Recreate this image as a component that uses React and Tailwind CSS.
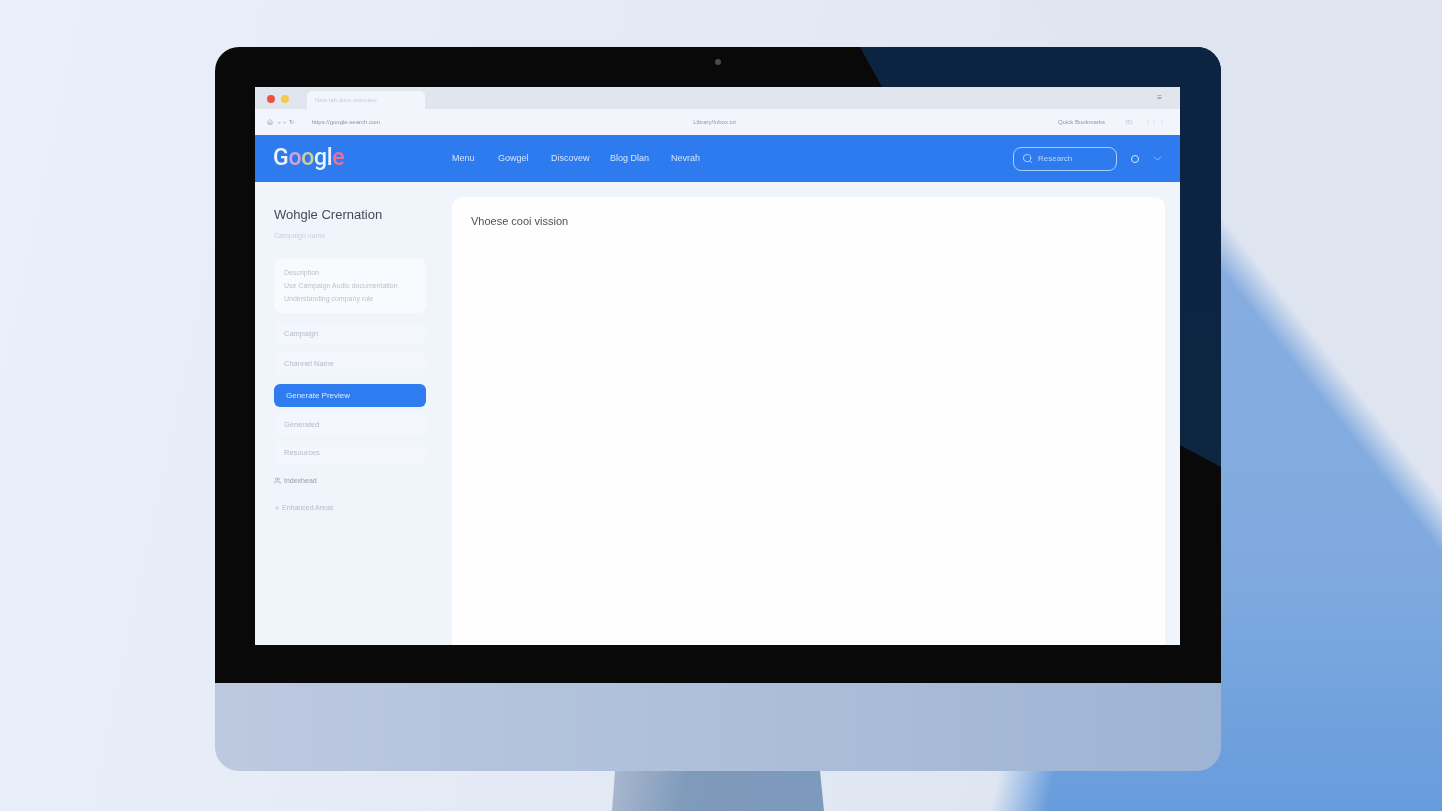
import { Search, ChevronDown, Plus, Home, Users } from 'lucide-react';

const navItems = [
  { label: 'Menu', width: 'w-[46px]' },
  { label: 'Gowgel', width: 'w-[53px]' },
  { label: 'Discovew', width: 'w-[59px]' },
  { label: 'Blog Dlan', width: 'w-[61px]' },
  { label: 'Nevrah', width: 'w-[40px]' },
];

function SideRow({ label, active }) {
  if (active) {
    return (
      <div className="flex h-[23px] items-center rounded-[6px] bg-[#2e7cf0] pl-[12px] text-[8px] text-[#dcebff] [filter:blur(0.35px)]">
        {label}
      </div>
    );
  }
  return (
    <div className="flex h-[23px] items-center rounded-[6px] bg-[#f3f6fc] pl-[10px] text-[7.5px] text-[#b4bbc8] [filter:blur(0.35px)]">
      {label}
    </div>
  );
}

function Browser() {
  return (
    <div className="relative flex h-[558px] w-[925px] flex-col overflow-hidden bg-[#f0f4fb]">
      {/* tab strip */}
      <div className="flex h-[22px] items-end bg-[#e1e5ed]">
        <div className="flex h-full items-center gap-[6px] pl-[12px] pt-[2px]">
          <span className="h-[8px] w-[8px] rounded-full bg-[#e8543f]" />
          <span className="h-[8px] w-[8px] rounded-full bg-[#f2c94c]" />
        </div>
        <div className="ml-[18px] flex h-[18px] w-[118px] items-center rounded-t-[5px] bg-[#f2f5fb] pl-[8px] text-[6px] text-[#c6ccd8] [filter:blur(0.3px)]">
          New tab docs overview
        </div>
        <div className="flex h-full flex-1 items-center justify-end pr-[18px] text-[8px] text-[#7d8490]">
          ≡
        </div>
      </div>

      {/* address row */}
      <div className="flex h-[26px] items-center bg-[#f2f5fb] pl-[12px] pr-[15px] text-[6px] text-[#8f96a3] [filter:blur(0.3px)]">
        <Home size={6} className="text-[#8f96a3]" />
        <span className="ml-[5px] w-[34px]">‹· ›· ↻·</span>
        <span className="w-[385px]">https://google.search.com</span>
        <span className="w-[368px]">Library/Inbox.txt</span>
        <span className="w-[68px]">Quick Bookmarks</span>
        <span className="w-[20px] text-[#b9bfca]">(5)</span>
        <span className="w-[14px] text-[#c6ccd6]">⋮⋮</span>
        <span className="text-[#c6ccd6]">⋮</span>
      </div>

      {/* blue header */}
      <div className="flex h-[47px] items-center bg-[#2d7bef] pl-[18px]">
        <div className="mb-[3px] flex w-[179px] font-['Roboto',sans-serif] text-[23px] font-medium leading-none tracking-[-0.3px] [filter:blur(0.4px)]">
          <span className="text-[#eaf5ff]">G</span>
          <span className="text-[#d7a3d3]">o</span>
          <span className="text-[#cfcf98]">o</span>
          <span className="text-[#e6f6ff]">g</span>
          <span className="text-[#e6f2ff]">l</span>
          <span className="text-[#ef6f9c]">e</span>
        </div>
        <div className="flex text-[9px] text-[#d4e6ff] [filter:blur(0.3px)]">
          {navItems.map((n) => (
            <span key={n.label} className={n.width}>{n.label}</span>
          ))}
        </div>
        <div className="ml-[302px] flex h-[24px] w-[104px] items-center rounded-[8px] border border-[#a9d0fb] pl-[8px]">
          <Search size={11} strokeWidth={1.6} className="text-[#d8eaff]" />
          <span className="ml-[5px] text-[8px] text-[#b9d7fd] [filter:blur(0.3px)]">Research</span>
        </div>
        <span className="ml-[14px] h-[8px] w-[8px] rounded-full border-[1.5px] border-[#d8eaff]" />
        <ChevronDown size={13} strokeWidth={1.3} className="ml-[12px] text-[#b9d7fd]" />
      </div>

      {/* body */}
      <div className="flex flex-1">
        <aside className="w-[197px] pl-[19px] pr-[26px] pt-[25px]">
          <h1 className="text-[13px] leading-[16px] text-[#454b55] [filter:blur(0.25px)]">Wohgle Crernation</h1>
          <p className="mt-[8px] text-[7px] leading-[9px] text-[#cbd2de] [filter:blur(0.3px)]">Campaign name</p>

          <div className="mt-[18px] flex h-[55px] flex-col justify-center gap-[4px] rounded-[8px] bg-[#f8fafd] pl-[10px] text-[7px] leading-[9px] text-[#bcc3cf] [filter:blur(0.3px)]">
            <span>Description</span>
            <span>Use Campaign Audio documentation</span>
            <span>Understanding company rule</span>
          </div>

          <div className="mt-[9px] flex flex-col gap-[7px]">
            <SideRow label="Campaign" />
            <SideRow label="Channel Name" />
          </div>
          <div className="mt-[9px]">
            <SideRow label="Generate Preview" active />
          </div>
          <div className="mt-[6px] flex flex-col gap-[5px]">
            <SideRow label="Generated" />
            <SideRow label="Resources" />
          </div>

          <div className="mt-[12px] flex items-center gap-[3px] text-[7px] leading-[9px] text-[#949cab] [filter:blur(0.3px)]">
            <Users size={7} />
            <span>Indexhead</span>
          </div>
          <div className="mt-[18px] flex items-center gap-[2px] text-[7px] leading-[9px] text-[#b4bbc8] [filter:blur(0.3px)]">
            <Plus size={6} />
            <span>Enhanced Areas</span>
          </div>
        </aside>

        <main className="mr-[15px] mt-[15px] flex-1 rounded-t-[10px] bg-[#fefefe] pl-[19px] pt-[17px]">
          <p className="text-[11px] leading-[14px] text-[#4d525b] [filter:blur(0.25px)]">Vhoese cooi vission</p>
        </main>
      </div>
    </div>
  );
}

export default function App() {
  return (
    <div className="h-[811px] w-full overflow-hidden bg-[linear-gradient(232deg,#dee4f0_18.8%,rgba(222,228,240,0)_20.8%),linear-gradient(102deg,#eaf0f9_0%,#e4eaf5_45%,#dfe6f2_72%,rgba(223,230,242,0)_75.5%),linear-gradient(180deg,#86ade0_30%,#80aadf_70%,#679cdc_100%)] pl-[215px] pt-[47px] font-['Liberation_Sans',sans-serif]">
      <div className="flex w-[1006px] flex-col">
        <div className="relative overflow-hidden rounded-t-[24px] bg-[#090909] px-[40px] pb-[38px] pt-[40px]">
          {/* navy reflection on the bezel */}
          <div className="absolute inset-0 bg-[linear-gradient(180deg,#0c2341,#0d2742)] [clip-path:polygon(645px_0,667px_40px,965px_398px,1006px_420px,1006px_0)]" />
          {/* camera */}
          <span className="absolute left-[500px] top-[12px] h-[6px] w-[6px] rounded-full bg-[#4a4a4a]" />
          <div className="relative">
            <Browser />
          </div>
        </div>
        <div className="h-[88px] rounded-b-[24px] bg-[linear-gradient(90deg,#bdc9df_0%,#b0c1db_40%,#9eb4d4_100%)]" />
        <div className="ml-[397px] h-[40px] w-[212px] bg-[linear-gradient(100deg,#aab8d0_0%,#7f9aba_35%,#7d99bc_100%)] [clip-path:polygon(3px_0,208px_0,212px_100%,0_100%)]" />
      </div>
    </div>
  );
}
